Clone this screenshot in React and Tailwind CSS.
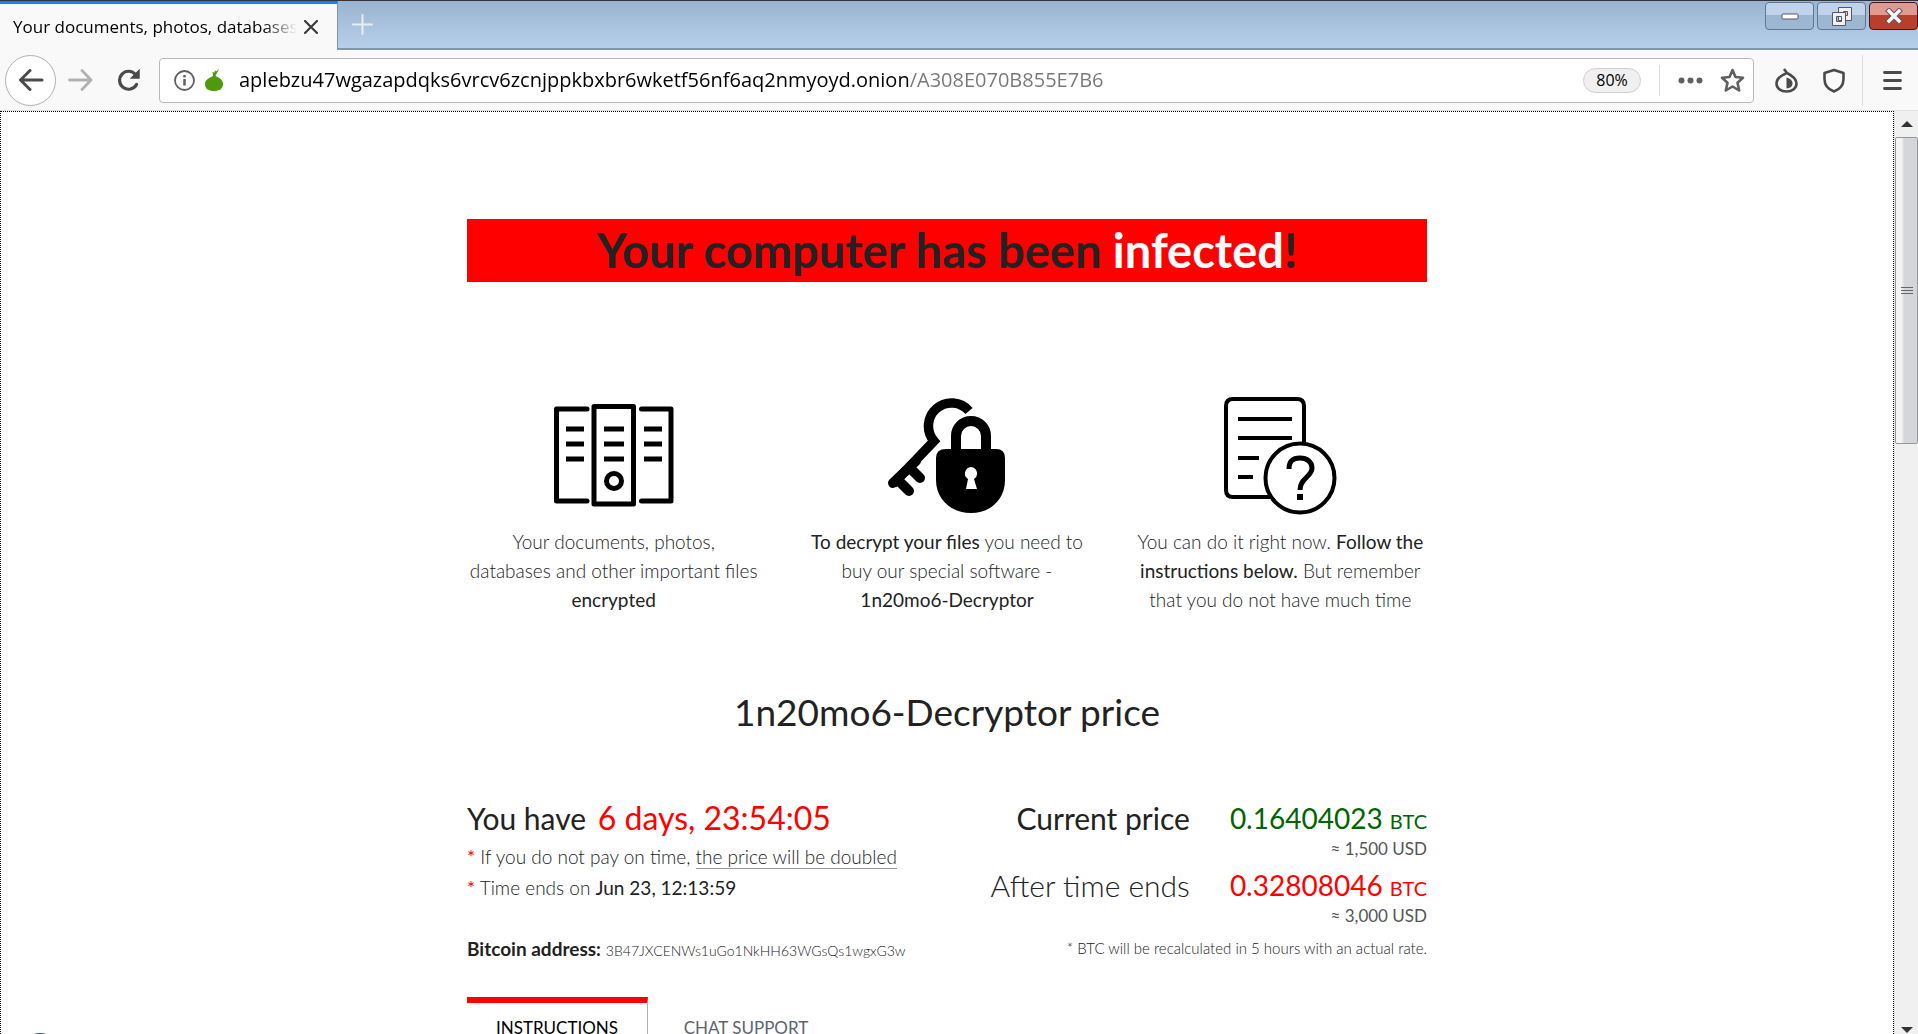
import React, { useState } from "react";

const ADDRESS = "aplebzu47wgazapdqks6vrcv6zcnjppkbxbr6wketf56nf6aq2nmyoyd.onion/A308E070B855E7B6";

const prices = [
  { label: "Current price", btc: "0.16404023", usd: "≈ 1,500 USD", labelClass: "font-normal", color: "text-[#006400]" },
  { label: "After time ends", btc: "0.32808046", usd: "≈ 3,000 USD", labelClass: "font-light", color: "text-[#ff0000]" },
];

const FilesIcon = () => (
  <svg width="120" height="104" viewBox="0 0 120 104" fill="none" stroke="black" strokeWidth="5" strokeLinecap="round" strokeLinejoin="round">
    <path d="M33 5H2.500V97H33" />
    <rect x="40" y="2.500" width="39.500" height="97.500" />
    <path d="M87.500 5H117V97H87.500" />
    <g strokeLinecap="butt">
      <path d="M12 25H30M12 40H30M12 55H30M50 25H70M50 40H70M50 55H70M90 25H108M90 40H108M90 55H108" />
    </g>
    <circle cx="60" cy="77" r="7.500" />
  </svg>
);

const KeyLockIcon = () => (
  <svg width="118" height="116" viewBox="0 0 118 116" fill="none" stroke="black">
    <path d="M81 13A23 23 0 1 0 46 43L5 86" strokeWidth="9.500" />
    <path d="M5 85L28 63M12 84L21 93M25 73L32 80" strokeWidth="10" strokeLinecap="round" />
    <path d="M68 56V38A15 15 0 0 1 98 38V56" strokeWidth="10" />
    <path fill="black" stroke="none" fillRule="evenodd" d="M58 51H108Q117 51 117 60V82C117 102 102 115 83 115S48 102 48 82V60Q48 51 58 51ZM83 69A6.500 6.500 0 0 0 80 81L78 91H89L86 81A6.500 6.500 0 0 0 83 69Z" />
  </svg>
);

const QuestionIcon = () => (
  <svg width="113" height="118" viewBox="0 0 113 118" fill="none" stroke="black" strokeWidth="4">
    <path d="M47 100H9Q2 100 2 93V9Q2 2 9 2H73Q80 2 80 9V46" />
    <path d="M14 22H68M14 41H68M14 61H35M14 80H29" />
    <circle cx="76" cy="81" r="34.500" />
    <path d="M65 72C65 64 69 61 76 61S88 65 88 71C88 80 76 81 76 93" strokeWidth="5" />
    <path d="M73 100H79" strokeWidth="6" />
  </svg>
);

const OnionIcon = () => (
  <svg width="18" height="22" viewBox="0 0 18 22" fill="#4f9a0c">
    <path d="M8 7C8 5 8 4 7 3L9.500 3.500L10 1L11 2.500L14 0L12 4L10.500 7C15 9 18 11 18 15C18 20 14 22 9 22S0 20 0 15C0 11 4 9 8 7Z" />
  </svg>
);

const TitleBar = () => (
  <div className="flex h-[50px] shrink-0 border-t border-[#33343b] bg-linear-to-b from-[#99b4d1] to-[#b9d1ea]">
    <div className="flex w-[338px] items-center border-t-[3px] border-r border-t-[#0a84ff] border-r-[#8095ad] bg-[#f9f9fa] pl-[13px]">
      <div className="w-[284px] overflow-hidden whitespace-nowrap bg-linear-to-r from-black from-88% to-transparent bg-clip-text text-[17px] text-transparent">
        Your documents, photos, databases
      </div>
      <button aria-label="Close tab" className="ml-[7px]">
        <svg width="14" height="14" viewBox="0 0 14 14" stroke="#3c3c3d" strokeWidth="2.200" strokeLinecap="round"><path d="M1 1L13 13M13 1L1 13" /></svg>
      </button>
    </div>
    <div className="flex flex-1 justify-between border-b-2 border-[#8095ad]">
      <button aria-label="New tab" className="ml-3 px-0.5">
        <svg width="21" height="21" viewBox="0 0 21 21" stroke="#e6edf5" strokeWidth="2" strokeLinecap="round"><path d="M10.500 1V20M1 10.500H20" /></svg>
      </button>
      <div className="flex gap-[3px] pt-px">
        <button aria-label="Minimize" className="flex h-7 w-[49px] items-center justify-center rounded-sm border border-[#5f7699] bg-linear-to-b from-[#c0d3ea] from-45% to-[#9db7d2] to-45%">
          <svg width="18" height="7" viewBox="0 0 18 7"><rect x="1" y="1" width="16" height="5" rx="1" fill="white" stroke="#545666" /></svg>
        </button>
        <button aria-label="Restore" className="flex h-7 w-[49px] items-center justify-center rounded-sm border border-[#5f7699] bg-linear-to-b from-[#c0d3ea] from-45% to-[#9db7d2] to-45%">
          <svg width="22" height="21" viewBox="0 0 22 21" fill="#f1f1f1" stroke="#545666">
            <path fillRule="evenodd" d="M7.500 1.500H20.500V14.500H7.500ZM12.500 5.500V9.500H16.500V5.500Z" />
            <path fillRule="evenodd" d="M1.500 6.500H14.500V19.500H1.500ZM5.500 10.500V15.500H10.500V10.500Z" />
          </svg>
        </button>
        <button aria-label="Close" className="flex h-7 w-[49px] items-center justify-center rounded-sm border border-[#4a1020] bg-linear-to-b from-[#e29a90] from-45% to-[#b8402b] to-45%">
          <svg width="18" height="16" viewBox="0 0 18 16" strokeLinecap="square">
            <path d="M4 3L14 13M14 3L4 13" stroke="#545666" strokeWidth="5.500" />
            <path d="M4 3L14 13M14 3L4 13" stroke="#f5f5f5" strokeWidth="3.500" />
          </svg>
        </button>
      </div>
    </div>
  </div>
);

const NavBar = () => {
  const [url, setUrl] = useState(ADDRESS);

  return (
    <div className="flex h-[61px] shrink-0 items-center border-b border-[#e1e1e2] bg-[#f9f9fa] pl-[5px] text-[#4a4a4b]">
      <button aria-label="Back" className="flex size-[51px] items-center justify-center rounded-full border border-[#b1b1b3] bg-white">
        <svg width="26" height="22" viewBox="0 0 26 22" fill="none" stroke="currentColor" strokeWidth="3" strokeLinecap="round" strokeLinejoin="round"><path d="M24 11H3M12 1.500L2.500 11L12 20.500" /></svg>
      </button>
      <button aria-label="Forward" className="ml-3 text-[#b1b1b3]">
        <svg width="25" height="22" viewBox="0 0 25 22" fill="none" stroke="currentColor" strokeWidth="2.800" strokeLinecap="round" strokeLinejoin="round"><path d="M1.500 11H22M14 1.500L23 11L14 20.500" /></svg>
      </button>
      <button aria-label="Reload" className="ml-6">
        <svg width="24" height="22" viewBox="0 0 24 22" fill="none" stroke="currentColor" strokeWidth="3.200" strokeLinecap="round"><path d="M19.500 15.500A9 9 0 1 1 18.500 5.500" /><path d="M22 1.500V9H14.500L22 1.500Z" strokeWidth="1.500" fill="currentColor" /></svg>
      </button>
      <div className="ml-[18px] flex h-[45px] flex-1 items-center rounded-sm border border-[#b8b8ba] bg-white pr-2 pl-[14px]">
        <svg width="21" height="21" viewBox="0 0 21 21" fill="none" stroke="#606061" strokeWidth="1.800"><circle cx="10.500" cy="10.500" r="9.500" /><path d="M10.500 9V15.500M10.500 5V7.500" strokeWidth="2.500" /></svg>
        <span className="ml-[10px]"><OnionIcon /></span>
        {/* host in black, path in grey */}
        <input
          aria-label="Address"
          value={url}
          onChange={(e) => setUrl(e.target.value)}
          className="ml-4 min-w-0 flex-1 bg-linear-to-r from-black from-[671px] to-[#77777a] to-[671px] bg-clip-text text-[20px] text-transparent outline-none"
        />
        <button className="h-[25px] w-[58px] rounded-full border border-[#cfcfd1] bg-[#f0f0f1] text-[16px] leading-none text-black">80%</button>
        <span className="ml-[18px] h-[31px] w-px bg-[#dcdcdd]"></span>
        <button aria-label="Page actions" className="ml-[18px]">
          <svg width="25" height="7" viewBox="0 0 25 7" fill="#606061"><circle cx="3.500" cy="3.500" r="3" /><circle cx="12.500" cy="3.500" r="3" /><circle cx="21.500" cy="3.500" r="3" /></svg>
        </button>
        <button aria-label="Bookmark" className="ml-[17px]">
          <svg width="25" height="25" viewBox="0 0 25 25" fill="none" stroke="#606061" strokeWidth="2.600" strokeLinejoin="round"><path d="M12.500 2L15.500 9L23 9.700L17.500 14.700L19.200 22.500L12.500 18.500L5.800 22.500L7.500 14.700L2 9.700L9.500 9Z" /></svg>
        </button>
      </div>
      <button aria-label="Tor circuit" className="ml-[21px]">
        <svg width="23" height="25" viewBox="0 0 23 25" fill="none" stroke="currentColor" strokeWidth="2.600" strokeLinejoin="round">
          <path d="M9 1L12 5C18 8 21.500 11 21.500 15.500C21.500 20 17.500 23.500 11.500 23.500S1.500 20 1.500 15.500C1.500 11 5 8 11 5.500" />
          <path d="M11.500 9.500C15.500 10.500 17.500 12.500 17.500 15.500S15.500 20 11.500 20.500Z" fill="currentColor" stroke="none" />
        </svg>
      </button>
      <button aria-label="Security level" className="ml-[25px]">
        <svg width="22" height="25" viewBox="0 0 22 25" fill="none" stroke="currentColor" strokeWidth="2.600" strokeLinejoin="round"><path d="M11 2L20.500 5V11C20.500 17 16.500 21.500 11 23.500C5.500 21.500 1.500 17 1.500 11V5Z" /></svg>
      </button>
      <span className="ml-[17px] h-[51px] w-px bg-[#dcdcdd]"></span>
      <button aria-label="Menu" className="mr-4 ml-5">
        <svg width="19" height="19" viewBox="0 0 19 19" stroke="currentColor" strokeWidth="2.800" strokeLinecap="round"><path d="M1.500 1.500H17.500M1.500 9.500H17.500M1.500 17.500H17.500" /></svg>
      </button>
    </div>
  );
};

const ScrollBar = () => (
  <div className="flex w-6 shrink-0 flex-col border-l border-[#e3e3e3] bg-[#f0f0f0]">
    <div className="flex h-[26px] items-center justify-center">
      <svg width="12" height="6" viewBox="0 0 12 6" fill="#333"><path d="M6 0L12 6H0Z" /></svg>
    </div>
    <div className="flex h-[307px] items-center justify-center rounded-xs border border-[#979797] bg-linear-to-r from-[#f5f5f5] from-25% to-[#d4d6d9] to-40%">
      <svg width="12" height="9" viewBox="0 0 12 9" stroke="#666"><path d="M0 1.500H12M0 4.500H12M0 7.500H12" /></svg>
    </div>
    <div className="mt-auto flex h-2 items-center justify-center">
      <svg width="12" height="6" viewBox="0 0 12 6" fill="#333"><path d="M0 0H12L6 6Z" /></svg>
    </div>
  </div>
);

const Step = ({ icon, children }) => (
  <div className="flex flex-col items-center">
    <div className="flex h-[126px] items-center">{icon}</div>
    <p className="mt-2 text-center text-[19px] leading-[29px] font-light whitespace-nowrap">{children}</p>
  </div>
);

const App = () => {
  const [tab, setTab] = useState("instructions");

  return (
    <div className="flex h-screen flex-col overflow-hidden bg-white font-['Open_Sans','Noto_Sans',sans-serif]">
      <TitleBar />
      <NavBar />

      <div className="flex min-h-0 flex-1">
        <main className="relative min-w-0 flex-1 overflow-hidden border-x border-t border-dotted border-black font-['Lato',sans-serif] text-[#222]">
          <div className="mx-auto w-full max-w-[960px] pt-[107px]">
            <h1 className="bg-[#ff0000] text-center text-[47px] leading-[63px] font-bold">
              Your computer has been <span className="text-white">infected</span>!
            </h1>

            <div className="mt-[111px] grid grid-cols-3 gap-10">
              <Step icon={<FilesIcon />}>
                Your documents, photos,<br />databases and other important files<br /><b>encrypted</b>
              </Step>
              <Step icon={<KeyLockIcon />}>
                <b>To decrypt your files</b> you need to<br />buy our special software -<br /><b>1n20mo6-Decryptor</b>
              </Step>
              <Step icon={<QuestionIcon />}>
                You can do it right now. <b>Follow the</b><br /><b>instructions below.</b> But remember<br />that you do not have much time
              </Step>
            </div>

            <h2 className="mt-[74px] text-center text-[37px] leading-[48px]">1n20mo6-Decryptor price</h2>

            <div className="mt-[64px] flex justify-between">
              <div>
                <div className="text-[30px] leading-[36px]">
                  You have <span className="ml-1 text-[32px] text-[#ff0000]">6 days, 23:54:05</span>
                </div>
                <p className="mt-[5px] text-[19px] leading-[31px] font-light">
                  <span className="font-normal text-[#ff0000]">*</span> If you do not pay on time, <span className="border-b border-[#999]">the price will be doubled</span>
                </p>
                <p className="text-[19px] leading-[31px] font-light">
                  <span className="font-normal text-[#ff0000]">*</span> Time ends on <b>Jun 23, 12:13:59</b>
                </p>
                <p className="mt-[31px] text-[19px] leading-[30px]">
                  <b>Bitcoin address:</b> <span className="text-[14px] font-light">3B47JXCENWs1uGo1NkHH63WGsQs1wgxG3w</span>
                </p>
              </div>

              <div className="text-right">
                <table className="ml-auto">
                  <tbody>
                    {prices.map((p) => (
                      <tr key={p.label} className="align-top">
                        <th className={`pr-10 text-right text-[30px] leading-[36px] ${p.labelClass}`}>{p.label}</th>
                        <td className="h-[67px] text-right">
                          <div className={`text-[28px] leading-[36px] ${p.color}`}>
                            {p.btc} <span className="text-[20px]">BTC</span>
                          </div>
                          <div className="text-[17px] leading-[20px] text-[#555]">{p.usd}</div>
                        </td>
                      </tr>
                    ))}
                  </tbody>
                </table>
                <p className="text-[15px] leading-[29px] font-light">* BTC will be recalculated in 5 hours with an actual rate.</p>
              </div>
            </div>

            <div className="mt-[31px] flex text-[17px]">
              <button
                onClick={() => setTab("instructions")}
                className={`h-14 w-[181px] border-t-[6px] border-r border-r-[#aab0ba] ${tab === "instructions" ? "border-t-[#ff0000] text-black" : "border-t-transparent text-[#5b6470]"}`}
              >
                INSTRUCTIONS
              </button>
              <button
                onClick={() => setTab("chat")}
                className={`h-14 w-[196px] border-t-[6px] ${tab === "chat" ? "border-t-[#ff0000] text-black" : "border-t-transparent text-[#5b6470]"}`}
              >
                CHAT SUPPORT
              </button>
            </div>
          </div>
          <span className="absolute -bottom-[39px] left-[19px] size-10 rounded-full bg-[#1b4f72]"></span>
        </main>
        <ScrollBar />
      </div>
    </div>
  );
};

export default App;
